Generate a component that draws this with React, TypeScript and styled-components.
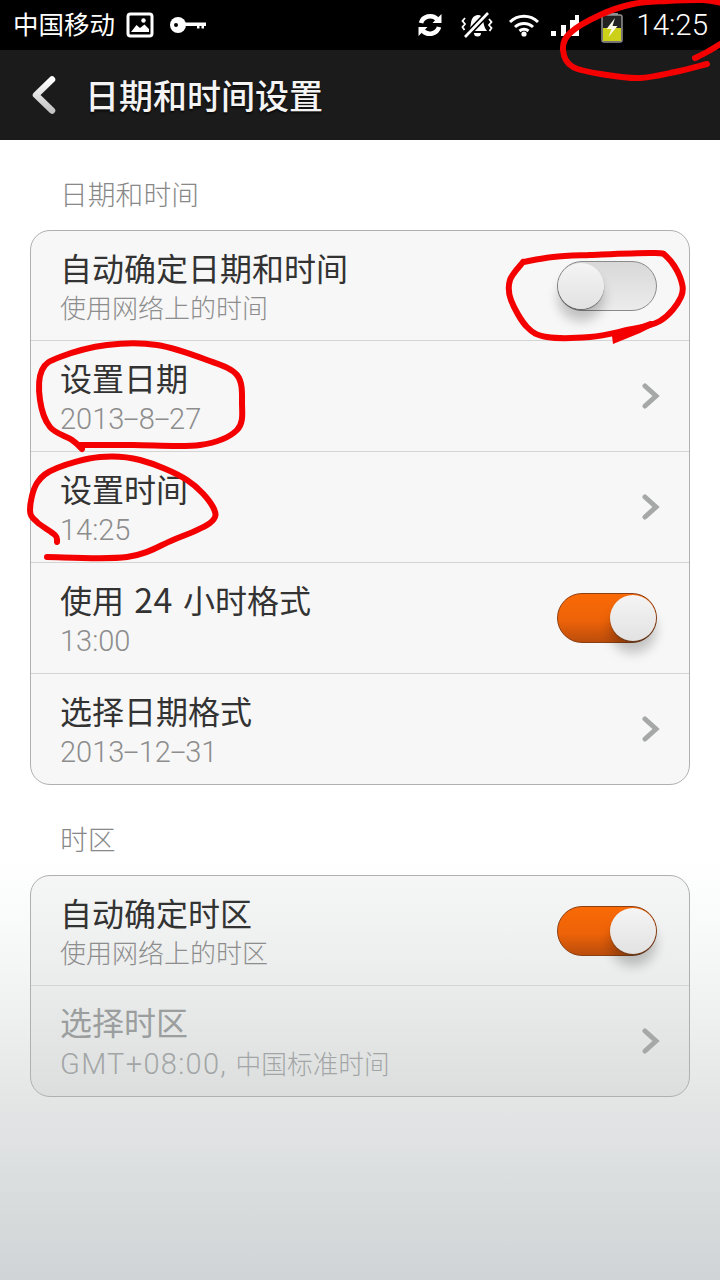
import { styled, createGlobalStyle } from "styled-components"

const GlobalStyle = createGlobalStyle`
  html, body {
    margin: 0;
    padding: 0;
    background: #fff;
  }
  * {
    box-sizing: border-box;
  }
`

const Screen = styled.div`
  position: relative;
  width: 720px;
  height: 1280px;
  overflow: hidden;
  display: flex;
  flex-direction: column;
  font-family: "Roboto", "Noto Sans CJK SC", sans-serif;
  background: linear-gradient(180deg, #fff 0, #fff 860px, #f3f5f5 980px, #e4e6e6 1100px, #d0d4d6 1280px);
`

const StatusBar = styled.div`
  height: 50px;
  background: #000;
  display: flex;
  align-items: center;
  color: #fff;
  padding: 0 12px 0 13px;
`

const Carrier = styled.span`
  font-size: 25.5px;
  line-height: 46px;
  margin: 0 11px 4px 0;
  font-family: "Noto Sans CJK SC", sans-serif;
  font-weight: 400;
`

const StatusRight = styled.div`
  margin-left: auto;
  display: flex;
  align-items: center;
`

const Clock = styled.span`
  font-size: 29.5px;
  font-weight: 300;
  margin-left: 13px;
`

const Header = styled.header`
  height: 90px;
  background: #1b1b1b;
  display: flex;
  align-items: center;
  padding-left: 30px;
  gap: 29px;
  color: #f4f4f4;
`

const HeaderTitle = styled.h1`
  margin: 0 0 2px;
  font-size: 34px;
  font-weight: 500;
  font-family: "Noto Sans CJK SC", sans-serif;
  text-shadow: 0 2px 2px rgba(0, 0, 0, 0.6);
`

const Main = styled.main`
  padding: 0 30px;
  display: flex;
  flex-direction: column;
`

const SectionLabel = styled.div`
  padding-left: 30px;
  margin-top: 36px;
  height: 36px;
  line-height: 35px;
  margin-bottom: 18px;
  font-size: 27.8px;
  color: #888;
  font-family: "Noto Sans CJK SC", sans-serif;
  font-weight: 300;
`

const Card = styled.section`
  border: 1px solid #b0b0b0;
  border-radius: 20px;
  background: rgba(0, 0, 0, 0.03);
  overflow: hidden;
`

const RowText = styled.div`
  display: flex;
  flex-direction: column;
`

const RowTitle = styled.div`
  font-size: 32px;
  line-height: 42px;
  margin-bottom: 3px;
  word-spacing: 3px;
  color: #333;
  font-family: "Noto Sans CJK SC", sans-serif;
  font-weight: 400;
`

const TitleNumber = styled.span`
  font-size: 34px;
  letter-spacing: 0.5px;
`

const RowSub = styled.div`
  font-size: 26px;
  line-height: 36px;
  margin-top: -2px;
  color: #8d8d8d;
  font-family: "Noto Sans CJK SC", sans-serif;
  font-weight: 300;
`

const NumberSub = styled(RowSub)`
  margin-top: 0;
  font-family: "Roboto", sans-serif;
  font-size: 29px;
`

const LatinSub = styled(NumberSub)`
  letter-spacing: 1.3px;
`

const CjkPart = styled.span`
  font-family: "Noto Sans CJK SC", sans-serif;
  font-size: 25.7px;
  letter-spacing: 0;
`

const Dash = styled.span`
  display: inline-block;
  margin: 0 3px;
  transform: scaleX(1.9);
`

const Row = styled.div<{ $disabled?: boolean }>`
  height: 111px;
  display: flex;
  align-items: center;
  justify-content: space-between;
  padding: 0 29px 0 29px;
  border-bottom: 1px solid #d4d4d4;

  &:first-child {
    height: 110px;
  }

  &:last-child {
    border-bottom: none;
    height: 110px;
  }

  ${RowTitle} {
    color: ${p => (p.$disabled ? "#9b9e9e" : "#333")};
  }

  ${RowSub} {
    color: ${p => (p.$disabled ? "#a3a6a6" : "#8d8d8d")};
  }
`

const Track = styled.div<{ $on: boolean }>`
  position: relative;
  width: 100px;
  height: 50px;
  margin-right: 3px;
  border-radius: 25px;
  border: 1px solid ${p => (p.$on ? "#8c3f12" : "#8a8a8a")};
  background: ${p =>
    p.$on ? "linear-gradient(180deg, #f96a06 0%, #ee6308 55%, #bb4d0c 100%)" : "linear-gradient(180deg, #d8d8d8, #ececec)"};
`

const Knob = styled.div<{ $on: boolean }>`
  position: absolute;
  top: 1px;
  left: ${p => (p.$on ? "52px" : "0")};
  width: 46px;
  height: 46px;
  border-radius: 50%;
  background: linear-gradient(180deg, #f4f4f4, #e2e2e2);
  box-shadow: 0 1px 1px rgba(60, 60, 60, 0.7), 0 12px 12px rgba(0, 0, 0, 0.22);
`

const Toggle = ({ on }: { on: boolean }) => (
  <Track $on={on}>
    <Knob $on={on} />
  </Track>
)

const ChevronSvg = styled.svg`
  width: 18px;
  height: 26px;
`

const Chevron = () => (
  <ChevronSvg viewBox="0 0 18 26">
    <polyline points="3,3 14,13 3,23" fill="none" stroke="#a6a8a8" strokeWidth="5" strokeLinecap="round" strokeLinejoin="miter" />
  </ChevronSvg>
)

const Ink = styled.svg`
  position: absolute;
  left: 0;
  top: 0;
  width: 720px;
  height: 1280px;
  pointer-events: none;
`

// hand drawn circles, smoothed through the points
const smooth = (pts: number[][]) => {
  let d = `M${pts[0][0]} ${pts[0][1]}`
  for (let i = 0; i < pts.length - 1; i++) {
    const p0 = pts[Math.max(i - 1, 0)]
    const p1 = pts[i]
    const p2 = pts[i + 1]
    const p3 = pts[Math.min(i + 2, pts.length - 1)]
    const c1 = [p1[0] + (p2[0] - p0[0]) / 6, p1[1] + (p2[1] - p0[1]) / 6]
    const c2 = [p2[0] - (p3[0] - p1[0]) / 6, p2[1] - (p3[1] - p1[1]) / 6]
    d += ` C${c1[0]} ${c1[1]} ${c2[0]} ${c2[1]} ${p2[0]} ${p2[1]}`
  }
  return d
}

const strokes = [
  [[722, 3], [703, 0], [667, 1], [633, 4], [600, 15], [570, 33], [563, 50], [573, 67], [607, 75], [640, 78], [675, 72], [707, 64]],
  [[695, 58], [707, 52], [722, 43]],
  [[523, 262], [510, 280], [511, 300], [527, 327], [547, 337], [590, 337], [623, 331], [660, 321], [681, 297], [680, 277], [667, 257], [653, 253], [590, 255], [553, 257], [523, 262]],
  [[82, 449], [72, 440], [50, 427], [40, 400], [42, 370], [60, 357], [107, 345], [157, 345], [207, 360], [237, 375], [242, 403], [237, 430], [200, 445], [133, 445], [80, 445]],
  [[57, 542], [55, 535], [37, 522], [30, 510], [37, 483], [57, 468], [100, 457], [140, 460], [187, 480], [213, 507], [210, 523], [173, 540], [127, 557], [47, 557]],
]

const Annotations = () => (
  <Ink viewBox="0 0 720 1280">
    {strokes.map((s, i) => (
      <path key={i} d={smooth(s)} fill="none" stroke="#f40000" strokeWidth="6" strokeLinecap="round" strokeLinejoin="round" />
    ))}
    <path d="M613 344 L612 336 L650 321 L662 322 L640 333 Z" fill="#f40000" />
  </Ink>
)

const PictureIcon = () => (
  <svg width="28" height="26" viewBox="0 0 28 26" style={{ marginRight: 16 }}>
    <rect x="2" y="2" width="24" height="22" rx="2.5" fill="none" stroke="#fff" strokeWidth="3" />
    <path d="M5 20 L10.5 13 L14 16 L18.5 12.5 L23 17 L23 20 Z" fill="#fff" />
    <circle cx="17.5" cy="8.5" r="2.2" fill="#fff" />
  </svg>
)

const KeyIcon = () => (
  <svg width="36" height="18" viewBox="0 0 36 18">
    <circle cx="8" cy="9" r="8" fill="#fff" />
    <circle cx="6" cy="9" r="2" fill="#000" />
    <path d="M15 6.5 H36 V10 H34 V12.5 H31.5 V10 H29.5 V12.5 H27 V10 H15 Z" fill="#fff" />
  </svg>
)

const SyncIcon = () => (
  <svg width="26" height="24" viewBox="0 0 26 24" style={{ marginRight: 18 }}>
    <path d="M4 10 A9.5 9 0 0 1 20 6" fill="none" stroke="#fff" strokeWidth="4.6" />
    <path d="M24.5 1 V10 H15.5 Z" fill="#fff" />
    <path d="M22 14 A9.5 9 0 0 1 6 18" fill="none" stroke="#fff" strokeWidth="4.6" />
    <path d="M1.5 23 V14 H10.5 Z" fill="#fff" />
  </svg>
)

const MuteIcon = () => (
  <svg width="32" height="26" viewBox="0 0 32 26" style={{ marginRight: 15 }}>
    <path d="M8 19 C10 15 9.5 10 11 7 C12.5 4 15 3 17 3 C20 3 21.5 5 22 8 C22.7 12 23 15 26 19 Z" fill="#fff" />
    <path d="M13 21 H20 A3.5 3.5 0 0 1 13 21 Z" fill="#fff" />
    <path d="M4 25 L27 1" stroke="#000" strokeWidth="6" />
    <path d="M4 25 L27 1" stroke="#fff" strokeWidth="2.6" />
    <path d="M4 6 L1.5 9 L4 12 L1.5 15 L3.5 18 M28 7 L30.5 10 L28 13 L30.5 16 L28.5 19" fill="none" stroke="#fff" strokeWidth="1.8" />
  </svg>
)

const WifiIcon = () => (
  <svg width="32" height="24" viewBox="0 0 32 24" style={{ marginRight: 10 }}>
    <path d="M2 9 A20 20 0 0 1 30 9 M7 14 A13 13 0 0 1 25 14 M11.5 18 A7 7 0 0 1 20.5 18" fill="none" stroke="#fff" strokeWidth="3" />
    <circle cx="16" cy="21" r="2.6" fill="#fff" />
  </svg>
)

const SignalIcon = () => (
  <svg width="30" height="24" viewBox="0 0 30 24">
    <rect x="1" y="18" width="5" height="5" fill="#fff" />
    <rect x="11" y="12" width="5" height="11" fill="#fff" />
    <rect x="20" y="7" width="5" height="16" fill="#fff" />
    <rect x="25" y="2" width="4" height="21" fill="#fff" />
  </svg>
)

const BatteryIcon = () => (
  <svg width="22" height="30" viewBox="0 0 22 30" style={{ marginLeft: 21, marginTop: 5 }}>
    <rect x="5" y="0" width="12" height="2" fill="#8d8d8d" />
    <rect x="1" y="2" width="20" height="27" rx="2" fill="#222" stroke="#929292" strokeWidth="1.5" />
    <rect x="2" y="15" width="18" height="13" fill="#cdd018" />
    <path d="M14 5 L5.5 16 H10.5 L7.5 24 L16.5 13 H11.5 Z" fill="#fafae6" />
  </svg>
)

const BackIcon = styled.svg`
  width: 26px;
  height: 38px;
`

const Back = () => (
  <BackIcon viewBox="0 0 26 38">
    <defs>
      <linearGradient id="back" x1="0" y1="0" x2="0" y2="1">
        <stop offset="0" stopColor="#fff" />
        <stop offset="1" stopColor="#c4c4c4" />
      </linearGradient>
    </defs>
    <path d="M22 3.5 L6 19 L22 34.5" fill="none" stroke="url(#back)" strokeWidth="6.5" strokeLinecap="round" strokeLinejoin="round" />
  </BackIcon>
)

export default function App() {
  return (
    <Screen>
      <GlobalStyle />
      <StatusBar>
        <Carrier>中国移动</Carrier>
        <PictureIcon />
        <KeyIcon />
        <StatusRight>
          <SyncIcon />
          <MuteIcon />
          <WifiIcon />
          <SignalIcon />
          <BatteryIcon />
          <Clock>14:25</Clock>
        </StatusRight>
      </StatusBar>
      <Header>
        <Back />
        <HeaderTitle>日期和时间设置</HeaderTitle>
      </Header>
      <Main>
        <SectionLabel>日期和时间</SectionLabel>
        <Card>
          <Row>
            <RowText>
              <RowTitle>自动确定日期和时间</RowTitle>
              <RowSub>使用网络上的时间</RowSub>
            </RowText>
            <Toggle on={false} />
          </Row>
          <Row>
            <RowText>
              <RowTitle>设置日期</RowTitle>
              <NumberSub>2013<Dash>-</Dash>8<Dash>-</Dash>27</NumberSub>
            </RowText>
            <Chevron />
          </Row>
          <Row>
            <RowText>
              <RowTitle>设置时间</RowTitle>
              <NumberSub>14:25</NumberSub>
            </RowText>
            <Chevron />
          </Row>
          <Row>
            <RowText>
              <RowTitle>使用 <TitleNumber>24</TitleNumber> 小时格式</RowTitle>
              <NumberSub>13:00</NumberSub>
            </RowText>
            <Toggle on />
          </Row>
          <Row>
            <RowText>
              <RowTitle>选择日期格式</RowTitle>
              <NumberSub>2013<Dash>-</Dash>12<Dash>-</Dash>31</NumberSub>
            </RowText>
            <Chevron />
          </Row>
        </Card>
        <SectionLabel>时区</SectionLabel>
        <Card>
          <Row>
            <RowText>
              <RowTitle>自动确定时区</RowTitle>
              <RowSub>使用网络上的时区</RowSub>
            </RowText>
            <Toggle on />
          </Row>
          <Row $disabled>
            <RowText>
              <RowTitle>选择时区</RowTitle>
              <LatinSub>GMT+08:00, <CjkPart>中国标准时间</CjkPart></LatinSub>
            </RowText>
            <Chevron />
          </Row>
        </Card>
      </Main>
      <Annotations />
    </Screen>
  )
}
